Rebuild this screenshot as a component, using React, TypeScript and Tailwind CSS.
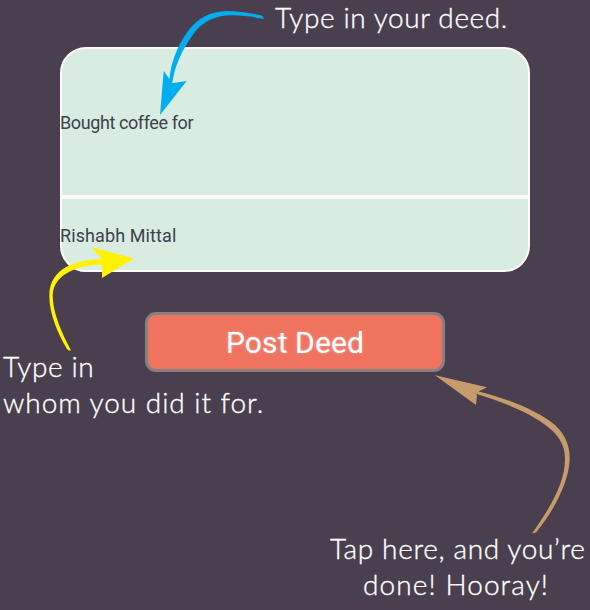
import React from "react";

type LineProps = { children: React.ReactNode; className?: string };

// One line of a handwritten-looking caption.
function Line({ children, className = "" }: LineProps) {
  return (
    <span className={`block h-9 whitespace-pre leading-9 [-webkit-text-stroke:0.35px_white] ${className}`}>
      {children}
    </span>
  );
}

function Arrows() {
  return (
    <svg className="pointer-events-none absolute inset-0" width="590" height="610" viewBox="0 0 590 610" aria-hidden="true">
      <path
        fill="#00aeef"
        d="M264 19 L262 15.500 C250 13 238 11 227 11 C210 11.500 198 18 188 31 C177 46 170.500 64 169.500 79 L163.700 71 L160 115 L186.700 81 L172.300 83.300 C174 68 182 50 192 36 C201 23 212 16 230 15.300 C243 15 254 17 264 19 Z"
      />
      <path
        fill="#fff200"
        d="M67 349 C58 334 49 313 49.300 295 C50 268 75 260 102 259 L91 247 L134 258.500 L102 278 L102 264.500 C82 265 53 272 52.700 296 C53 314 62 333 71 350.500 L68.500 350.500 Z"
      />
      <path
        fill="#c69c6d"
        d="M435 375.300 L487 387.200 L478.500 391.500 C510 399 539 412 555 425 C565 434 570 446 569.700 459 C569 483 553 512 536 532.500 L532 533.500 C549 509 565 484 565 459 C565 444 558 435 548 427 C531 413 501 401 474 393.300 L477 395 L476 405 Z"
      />
    </svg>
  );
}

export default function App() {
  return (
    <main className="relative flex h-[610px] w-[590px] flex-col overflow-hidden bg-[#493f4e] font-['Lato',sans-serif] text-[28px] font-light text-white">
      <header className="flex h-[47px] shrink-0 items-start pl-[275px]">
        <Line className="-mt-[1px] tracking-[0.6px]">Type in your deed.</Line>
      </header>

      <section className="ml-[60px] flex h-[225px] w-[470px] shrink-0 flex-col rounded-[26px] border-2 border-[#fffafa] bg-[#d9ece1] font-['Roboto',sans-serif] text-[18px] font-normal text-[#3b414c]">
        <div className="flex h-[150px] items-center border-b-4 border-[#fffafa]">
          <span className="-ml-[2px] whitespace-nowrap tracking-[-0.4px]">Bought coffee for</span>
        </div>
        <div className="flex flex-1 items-center pt-[2px]">
          <span className="-ml-[2px] whitespace-nowrap tracking-[0.1px]">Rishabh Mittal</span>
        </div>
      </section>

      <button className="ml-[145px] mt-10 flex h-[60px] w-[300px] shrink-0 items-center justify-center rounded-[11px] border-[3px] border-[#858180] bg-[#f07360] font-['Roboto',sans-serif] text-[30px] font-normal tracking-[0.1px] text-white [text-shadow:0_0_3px_rgba(255,255,255,0.4)]">
        Post Deed
      </button>

      <p className="-mt-[24px] pl-[3px]">
        <Line className="tracking-[0.6px]">Type in</Line>
        <Line className="tracking-[0.95px]">whom you did it for.</Line>
      </p>

      <p className="mt-[110px] pl-[330px]">
        <Line className="tracking-[0.65px]">Tap here, and you’re</Line>
        <Line className="pl-[33px] tracking-[1.1px]">done! Hooray!</Line>
      </p>

      <Arrows />
    </main>
  );
}
